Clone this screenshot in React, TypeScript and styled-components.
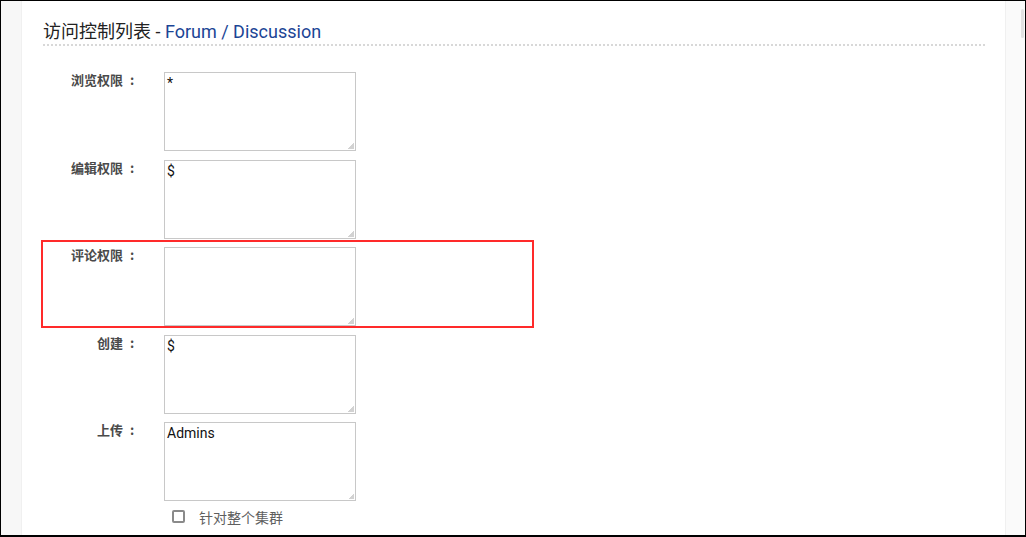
import React from 'react'
import styled, { createGlobalStyle } from 'styled-components'

const GlobalStyle = createGlobalStyle`
  html, body {
    margin: 0;
    padding: 0;
    background: #fff;
  }
  * {
    box-sizing: border-box;
  }
`

const Frame = styled.div`
  width: 1026px;
  height: 537px;
  border: 1px solid #000;
  border-bottom-width: 2px;
  display: flex;
  overflow: hidden;
  font-family: Roboto, 'Noto Sans CJK SC', sans-serif;
`

const Gutter = styled.div`
  width: 21px;
  flex-shrink: 0;
  background: #f7f7f7;
  border-right: 1px solid #f0f0f0;
`

const Main = styled.main`
  flex: 1;
  background: #fff;
  padding: 20px 20px 0 21px;
`

const Rail = styled.div`
  width: 20px;
  flex-shrink: 0;
  background: #fafafa;
  border-left: 1px solid #f0f0f0;
  display: flex;
  justify-content: flex-end;
  padding: 8px 1px 0 0;
`

const Thumb = styled.div`
  width: 3px;
  height: 29px;
  border-radius: 2px;
  background: #e2e2e2;
`

const Title = styled.h2`
  margin: 0;
  padding-bottom: 1px;
  font-size: 18px;
  line-height: 22px;
  font-weight: normal;
  color: #222;
  border-bottom: 2px dotted #d8d8d8;
`

const Scope = styled.span`
  color: #1c4595;
`

const Form = styled.div`
  margin-top: 19px;
  margin-left: -2px;
  display: flex;
  flex-direction: column;
`

const Row = styled.div<{ $flagged?: boolean }>`
  width: 493px;
  display: flex;
  align-items: flex-start;
  padding: 5px 0 0;
  border: 2px solid ${p => (p.$flagged ? '#ff2a2a' : 'transparent')};
  margin-bottom: -0.5px;
`

const Label = styled.label`
  width: 98px;
  flex-shrink: 0;
  margin-right: 23px;
  text-align: right;
  font-family: 'Noto Sans CJK SC', sans-serif;
  font-size: 13px;
  line-height: 15px;
  font-weight: bold;
  color: #4a4a4a;
  white-space: nowrap;
`

const Colon = styled.span`
  display: inline-block;
  width: 18px;
  text-align: center;
`

const Field = styled.textarea`
  width: 192px;
  height: 79px;
  margin: 0;
  padding: 2px 2px;
  border: 1px solid #c8c8c8;
  border-radius: 0;
  font-family: Roboto, 'Noto Sans CJK SC', sans-serif;
  font-size: 14px;
  line-height: 16px;
  color: #111;
  background: #fff;
  resize: both;
  outline: none;

  &::-webkit-scrollbar {
    width: 0;
    height: 0;
  }
  &::-webkit-resizer {
    background: linear-gradient(135deg, transparent 50%, #d2d2d2 50%) no-repeat right 1px bottom 1px / 6px 6px;
  }
`

const CheckRow = styled.label`
  display: flex;
  align-items: center;
  gap: 14px;
  margin: 5px 0 0 131px;
  font-family: 'Noto Sans CJK SC', sans-serif;
  font-size: 14px;
  line-height: 18px;
  color: #5e5e5e;
`

const Box = styled.span`
  width: 13px;
  height: 13px;
  border: 2px solid #8a8a8a;
  border-radius: 2px;
  background: #fff;
`

const rows = [
  { label: '浏览权限', value: '*' },
  { label: '编辑权限', value: '$' },
  { label: '评论权限', value: '', flagged: true },
  { label: '创建', value: '$' },
  { label: '上传', value: 'Admins' },
]

const App: React.FC = () => {
  return (
    <>
      <GlobalStyle />
      <Frame>
        <Gutter />
        <Main>
          <Title>
            访问控制列表 - <Scope>Forum / Discussion</Scope>
          </Title>
          <Form>
            {rows.map(r => (
              <Row key={r.label} $flagged={r.flagged}>
                <Label>
                  {r.label}
                  <Colon>:</Colon>
                </Label>
                <Field defaultValue={r.value} />
              </Row>
            ))}
            <CheckRow>
              <Box />
              <span>针对整个集群</span>
            </CheckRow>
          </Form>
        </Main>
        <Rail>
          <Thumb />
        </Rail>
      </Frame>
    </>
  )
}

export default App
